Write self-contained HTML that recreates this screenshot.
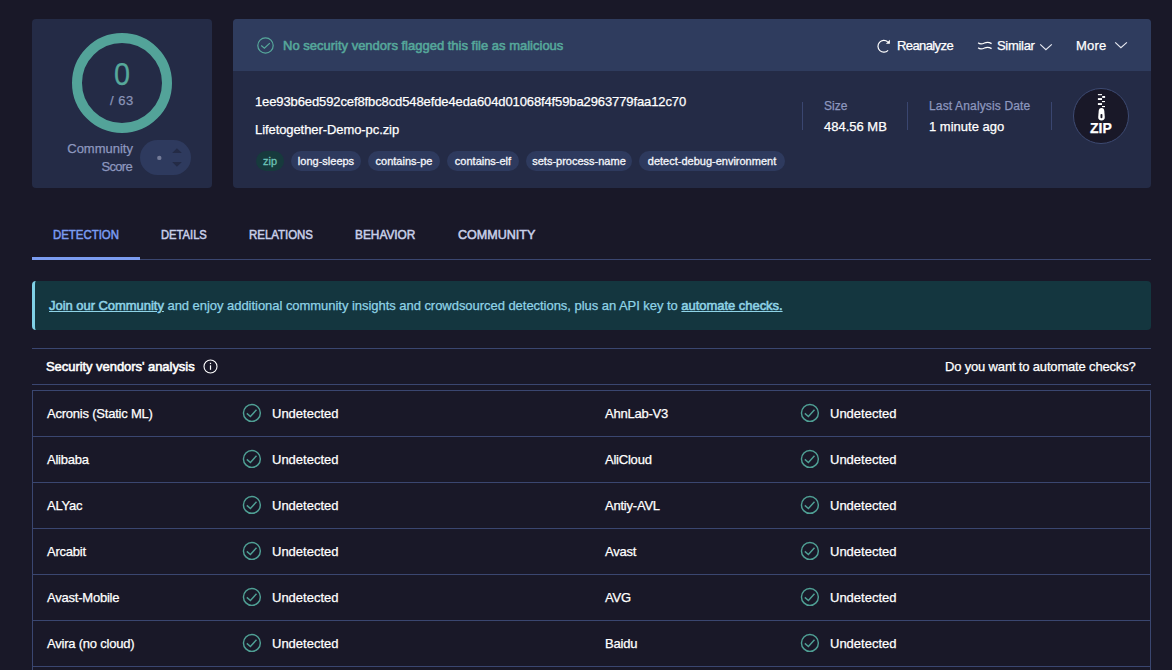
<!DOCTYPE html>
<html><head><meta charset="utf-8">
<style>
*{margin:0;padding:0;box-sizing:border-box}
html,body{width:1172px;height:670px;overflow:hidden;background:#191828;font-family:"Liberation Sans",sans-serif;color:#fff}
.a{position:absolute}
.t{position:absolute;white-space:nowrap;line-height:1;-webkit-text-stroke:0.25px currentColor}
.card{position:absolute;background:#242b46;border-radius:4px}
.hl{position:absolute;height:1px;background:#3a4670}
.vl{position:absolute;width:1px;background:#3a4670}
.pill{position:absolute;top:151px;height:20px;border-radius:10px;background:#2e3a5e;color:#f4f6fb;font-size:11px;line-height:20px;text-align:center;white-space:nowrap;-webkit-text-stroke:0.3px currentColor}
</style></head>
<body>
<div class="card" style="left:32px;top:19px;width:180px;height:169px"></div>
<svg class="a" style="left:72px;top:33px" width="100" height="100" viewBox="0 0 100 100"><circle cx="50" cy="50" r="45" fill="none" stroke="#53a399" stroke-width="10"/></svg>
<div class="t" style="left:114px;top:58px;font-size:32px;color:#56a89b;font-weight:normal;letter-spacing:0px;transform:scaleX(0.9);transform-origin:0 0">0</div>
<div class="t" style="left:110px;top:94px;font-size:13px;color:#8a94b8;font-weight:normal;letter-spacing:0.5px;">/ 63</div>
<div class="t" style="left:50px;top:142px;width:83px;text-align:right;font-size:13px;color:#8d97bf">Community</div>
<div class="t" style="left:50px;top:160px;width:82px;text-align:right;font-size:13px;color:#8d97bf;letter-spacing:-0.7px">Score</div>
<div class="a" style="left:140px;top:140px;width:51px;height:35px;border-radius:18px;background:#2e3a5e"></div>
<svg class="a" style="left:138px;top:136px" width="56" height="42" viewBox="0 0 56 42"><circle cx="21.3" cy="21.9" r="2.2" fill="#747b98"/><path d="M38.9 12.2 L43.9 16.9 L34.2 16.9 Z" fill="#242b46"/><path d="M34.2 26 L43.9 26 L38.9 30.7 Z" fill="#242b46"/></svg>
<div class="card" style="left:233px;top:19px;width:918px;height:169px;overflow:hidden"><div class="a" style="left:0;top:0;width:918px;height:52px;background:#2f3c5e"></div></div>
<div class="a" style="left:257px;top:37px"><svg width="17" height="17" viewBox="0 0 17 17"><circle cx="8.5" cy="8.5" r="7.7" fill="none" stroke="#56a89b" stroke-width="1.2"/><path d="M4.2 8.5 L7.4 11.3 L12.8 6.1" fill="none" stroke="#56a89b" stroke-width="1.2"/></svg></div>
<div class="t" style="left:283px;top:39px;font-size:13px;color:#56a89b;font-weight:normal;letter-spacing:0px;-webkit-text-stroke:0.55px currentColor;">No security vendors flagged this file as malicious</div>
<div class="t" style="left:897px;top:39px;font-size:13px;color:#fff;font-weight:normal;letter-spacing:-0.6px;">Reanalyze</div>
<svg class="a" style="left:872px;top:33px" width="24" height="24" viewBox="0 0 24 24"><path d="M16.1 17.4 A5.9 5.9 0 1 1 15.7 8.8" fill="none" stroke="#fff" stroke-width="1.2"/><path d="M17.9 6.8 L17.9 10.8 L13.9 10.8 Z" fill="#fff"/></svg>
<svg class="a" style="left:972px;top:33px" width="24" height="24" viewBox="0 0 24 24"><path d="M6.2 9.8 C8 11.5 10 11.2 12.5 10 C15 8.8 17 9 19.6 10.6 M6.2 14.8 C8 16.5 10 16.2 12.5 15 C15 13.8 17 14 19.6 15.6" fill="none" stroke="#fff" stroke-width="1.3"/></svg>
<svg class="a" style="left:1036px;top:36px" width="20" height="20" viewBox="0 0 20 20"><path d="M4.2 8.4 L9.9 13.6 L15.8 8.4" fill="none" stroke="#e6e8f0" stroke-width="1.2"/></svg>
<svg class="a" style="left:1110px;top:36px" width="20" height="20" viewBox="0 0 20 20"><path d="M5.2 6.4 L10.9 11.6 L16.9 6.4" fill="none" stroke="#e6e8f0" stroke-width="1.2"/></svg>
<div class="t" style="left:997px;top:39px;font-size:13px;color:#fff;font-weight:normal;letter-spacing:-0.3px;">Similar</div>
<div class="t" style="left:1076px;top:39px;font-size:13px;color:#fff;font-weight:normal;letter-spacing:0.2px;">More</div>
<div class="t" style="left:255px;top:95px;font-size:13px;color:#fff;font-weight:normal;letter-spacing:-0.11px;">1ee93b6ed592cef8fbc8cd548efde4eda604d01068f4f59ba2963779faa12c70</div>
<div class="t" style="left:255px;top:123px;font-size:13px;color:#fff;font-weight:normal;letter-spacing:-0.08px;">Lifetogether-Demo-pc.zip</div>
<div class="pill" style="left:256px;width:28px;background:#173a3d;color:#6cc3b6">zip</div>
<div class="pill" style="left:291px;width:70px;">long-sleeps</div>
<div class="pill" style="left:368px;width:72px;">contains-pe</div>
<div class="pill" style="left:447px;width:72px;">contains-elf</div>
<div class="pill" style="left:526px;width:106px;">sets-process-name</div>
<div class="pill" style="left:639px;width:146px;">detect-debug-environment</div>
<div class="vl" style="left:802px;top:102px;height:28px"></div>
<div class="vl" style="left:907px;top:102px;height:28px"></div>
<div class="vl" style="left:1051px;top:102px;height:28px"></div>
<div class="t" style="left:824px;top:100px;font-size:12px;color:#8d97bf;font-weight:normal;letter-spacing:0px;">Size</div>
<div class="t" style="left:824px;top:120px;font-size:13px;color:#fff;font-weight:normal;letter-spacing:0px;">484.56 MB</div>
<div class="t" style="left:929px;top:100px;font-size:12px;color:#8d97bf;font-weight:normal;letter-spacing:0.15px;">Last Analysis Date</div>
<div class="t" style="left:929px;top:120px;font-size:13px;color:#fff;font-weight:normal;letter-spacing:0px;">1 minute ago</div>
<div class="a" style="left:1073px;top:88px;width:56px;height:56px;border-radius:28px;background:#191828;border:1px solid #3d4a72"></div>
<div class="t" style="left:1090px;top:121px;font-size:14px;color:#fff;font-weight:bold;letter-spacing:0px;">ZIP</div>
<svg class="a" style="left:1090px;top:90px" width="24" height="32" viewBox="0 0 24 32"><g fill="#fff"><rect x="7.9" y="4.1" width="4.1" height="1.1"/><rect x="12.2" y="6" width="2.9" height="1.9"/><rect x="7.9" y="8.1" width="4.1" height="1.9"/><rect x="12" y="11" width="3" height="1.1"/><rect x="7.9" y="13.1" width="4.1" height="1.9"/><rect x="12" y="16" width="3" height="1.1"/><path d="M11.5 18 C9.6 18 8.9 19.3 8.7 21 L8.2 27 C8 29.4 9.4 30.4 11.5 30.4 C13.6 30.4 15 29.4 14.8 27 L14.3 21 C14.1 19.3 13.4 18 11.5 18 Z"/></g><rect x="10.5" y="23.9" width="1.9" height="4.3" rx="0.9" fill="#191828"/></svg>
<div class="t" style="left:53px;top:228px;font-size:13.3px;color:#7b9cf0;font-weight:normal;letter-spacing:0px;-webkit-text-stroke:0.55px currentColor;transform:scaleX(0.859);transform-origin:0 0;">DETECTION</div>
<div class="t" style="left:161px;top:228px;font-size:13.3px;color:#c8cfe8;font-weight:normal;letter-spacing:0px;-webkit-text-stroke:0.55px currentColor;transform:scaleX(0.842);transform-origin:0 0;">DETAILS</div>
<div class="t" style="left:249px;top:228px;font-size:13.3px;color:#c8cfe8;font-weight:normal;letter-spacing:0px;-webkit-text-stroke:0.55px currentColor;transform:scaleX(0.860);transform-origin:0 0;">RELATIONS</div>
<div class="t" style="left:355px;top:228px;font-size:13.3px;color:#c8cfe8;font-weight:normal;letter-spacing:0px;-webkit-text-stroke:0.55px currentColor;transform:scaleX(0.892);transform-origin:0 0;">BEHAVIOR</div>
<div class="t" style="left:458px;top:228px;font-size:13.3px;color:#c8cfe8;font-weight:normal;letter-spacing:0px;-webkit-text-stroke:0.55px currentColor;transform:scaleX(0.944);transform-origin:0 0;">COMMUNITY</div>
<div class="hl" style="left:32px;top:259px;width:1119px"></div>
<div class="a" style="left:32px;top:257px;width:108px;height:3px;background:#7b9cf0"></div>
<div class="a" style="left:32px;top:281px;width:1119px;height:49px;background:#14363f;border-radius:4px;border-left:3px solid #7fd0e6"></div>
<div class="t" style="left:49px;top:299px;font-size:13px;color:#8fd3e6;font-weight:normal;letter-spacing:-0.04px;"><span style="text-decoration:underline;-webkit-text-stroke:0.55px currentColor">Join our Community</span> and enjoy additional community insights and crowdsourced detections, plus an API key to <span style="text-decoration:underline;-webkit-text-stroke:0.55px currentColor">automate checks.</span></div>
<div class="hl" style="left:32px;top:348px;width:1119px"></div>
<div class="t" style="left:46px;top:360px;font-size:13px;color:#fff;font-weight:normal;letter-spacing:-0.05px;-webkit-text-stroke:0.55px currentColor;">Security vendors' analysis</div>
<div class="a" style="left:203px;top:359px"><svg width="15" height="15" viewBox="0 0 15 15"><circle cx="7.5" cy="7.5" r="6.5" fill="none" stroke="#fff" stroke-width="1.1"/><rect x="6.9" y="6.3" width="1.2" height="4.5" fill="#fff"/><rect x="6.9" y="3.8" width="1.2" height="1.3" fill="#fff"/></svg></div>
<div class="t" style="left:945px;top:360px;font-size:13px;color:#fff;font-weight:normal;letter-spacing:-0.17px;">Do you want to automate checks?</div>
<div class="hl" style="left:32px;top:384px;width:1119px"></div>
<div class="a" style="left:32px;top:390px;width:1119px;height:290px;border:1px solid #3a4670;border-bottom:none"></div>
<div class="t" style="left:47px;top:407px;font-size:13px;color:#fff;font-weight:normal;letter-spacing:-0.22px;">Acronis (Static ML)</div>
<div class="a" style="left:242px;top:403px"><svg width="20" height="20" viewBox="0 0 20 20"><circle cx="9.9" cy="9.9" r="8.45" fill="none" stroke="#4f9f94" stroke-width="1.45"/><path d="M4.8 10.4 L8.4 13.5 L14.5 6.8" fill="none" stroke="#4f9f94" stroke-width="1.45"/></svg></div>
<div class="t" style="left:272px;top:407px;font-size:13px;color:#fff;font-weight:normal;letter-spacing:0px;">Undetected</div>
<div class="t" style="left:605px;top:407px;font-size:13px;color:#fff;font-weight:normal;letter-spacing:-0.22px;">AhnLab-V3</div>
<div class="a" style="left:800px;top:403px"><svg width="20" height="20" viewBox="0 0 20 20"><circle cx="9.9" cy="9.9" r="8.45" fill="none" stroke="#4f9f94" stroke-width="1.45"/><path d="M4.8 10.4 L8.4 13.5 L14.5 6.8" fill="none" stroke="#4f9f94" stroke-width="1.45"/></svg></div>
<div class="t" style="left:830px;top:407px;font-size:13px;color:#fff;font-weight:normal;letter-spacing:0px;">Undetected</div>
<div class="hl" style="left:32px;top:436px;width:1119px"></div>
<div class="t" style="left:47px;top:453px;font-size:13px;color:#fff;font-weight:normal;letter-spacing:-0.22px;">Alibaba</div>
<div class="a" style="left:242px;top:449px"><svg width="20" height="20" viewBox="0 0 20 20"><circle cx="9.9" cy="9.9" r="8.45" fill="none" stroke="#4f9f94" stroke-width="1.45"/><path d="M4.8 10.4 L8.4 13.5 L14.5 6.8" fill="none" stroke="#4f9f94" stroke-width="1.45"/></svg></div>
<div class="t" style="left:272px;top:453px;font-size:13px;color:#fff;font-weight:normal;letter-spacing:0px;">Undetected</div>
<div class="t" style="left:605px;top:453px;font-size:13px;color:#fff;font-weight:normal;letter-spacing:-0.22px;">AliCloud</div>
<div class="a" style="left:800px;top:449px"><svg width="20" height="20" viewBox="0 0 20 20"><circle cx="9.9" cy="9.9" r="8.45" fill="none" stroke="#4f9f94" stroke-width="1.45"/><path d="M4.8 10.4 L8.4 13.5 L14.5 6.8" fill="none" stroke="#4f9f94" stroke-width="1.45"/></svg></div>
<div class="t" style="left:830px;top:453px;font-size:13px;color:#fff;font-weight:normal;letter-spacing:0px;">Undetected</div>
<div class="hl" style="left:32px;top:482px;width:1119px"></div>
<div class="t" style="left:47px;top:499px;font-size:13px;color:#fff;font-weight:normal;letter-spacing:-0.22px;">ALYac</div>
<div class="a" style="left:242px;top:495px"><svg width="20" height="20" viewBox="0 0 20 20"><circle cx="9.9" cy="9.9" r="8.45" fill="none" stroke="#4f9f94" stroke-width="1.45"/><path d="M4.8 10.4 L8.4 13.5 L14.5 6.8" fill="none" stroke="#4f9f94" stroke-width="1.45"/></svg></div>
<div class="t" style="left:272px;top:499px;font-size:13px;color:#fff;font-weight:normal;letter-spacing:0px;">Undetected</div>
<div class="t" style="left:605px;top:499px;font-size:13px;color:#fff;font-weight:normal;letter-spacing:-0.22px;">Antiy-AVL</div>
<div class="a" style="left:800px;top:495px"><svg width="20" height="20" viewBox="0 0 20 20"><circle cx="9.9" cy="9.9" r="8.45" fill="none" stroke="#4f9f94" stroke-width="1.45"/><path d="M4.8 10.4 L8.4 13.5 L14.5 6.8" fill="none" stroke="#4f9f94" stroke-width="1.45"/></svg></div>
<div class="t" style="left:830px;top:499px;font-size:13px;color:#fff;font-weight:normal;letter-spacing:0px;">Undetected</div>
<div class="hl" style="left:32px;top:528px;width:1119px"></div>
<div class="t" style="left:47px;top:545px;font-size:13px;color:#fff;font-weight:normal;letter-spacing:-0.22px;">Arcabit</div>
<div class="a" style="left:242px;top:541px"><svg width="20" height="20" viewBox="0 0 20 20"><circle cx="9.9" cy="9.9" r="8.45" fill="none" stroke="#4f9f94" stroke-width="1.45"/><path d="M4.8 10.4 L8.4 13.5 L14.5 6.8" fill="none" stroke="#4f9f94" stroke-width="1.45"/></svg></div>
<div class="t" style="left:272px;top:545px;font-size:13px;color:#fff;font-weight:normal;letter-spacing:0px;">Undetected</div>
<div class="t" style="left:605px;top:545px;font-size:13px;color:#fff;font-weight:normal;letter-spacing:-0.22px;">Avast</div>
<div class="a" style="left:800px;top:541px"><svg width="20" height="20" viewBox="0 0 20 20"><circle cx="9.9" cy="9.9" r="8.45" fill="none" stroke="#4f9f94" stroke-width="1.45"/><path d="M4.8 10.4 L8.4 13.5 L14.5 6.8" fill="none" stroke="#4f9f94" stroke-width="1.45"/></svg></div>
<div class="t" style="left:830px;top:545px;font-size:13px;color:#fff;font-weight:normal;letter-spacing:0px;">Undetected</div>
<div class="hl" style="left:32px;top:574px;width:1119px"></div>
<div class="t" style="left:47px;top:591px;font-size:13px;color:#fff;font-weight:normal;letter-spacing:-0.22px;">Avast-Mobile</div>
<div class="a" style="left:242px;top:587px"><svg width="20" height="20" viewBox="0 0 20 20"><circle cx="9.9" cy="9.9" r="8.45" fill="none" stroke="#4f9f94" stroke-width="1.45"/><path d="M4.8 10.4 L8.4 13.5 L14.5 6.8" fill="none" stroke="#4f9f94" stroke-width="1.45"/></svg></div>
<div class="t" style="left:272px;top:591px;font-size:13px;color:#fff;font-weight:normal;letter-spacing:0px;">Undetected</div>
<div class="t" style="left:605px;top:591px;font-size:13px;color:#fff;font-weight:normal;letter-spacing:-0.22px;">AVG</div>
<div class="a" style="left:800px;top:587px"><svg width="20" height="20" viewBox="0 0 20 20"><circle cx="9.9" cy="9.9" r="8.45" fill="none" stroke="#4f9f94" stroke-width="1.45"/><path d="M4.8 10.4 L8.4 13.5 L14.5 6.8" fill="none" stroke="#4f9f94" stroke-width="1.45"/></svg></div>
<div class="t" style="left:830px;top:591px;font-size:13px;color:#fff;font-weight:normal;letter-spacing:0px;">Undetected</div>
<div class="hl" style="left:32px;top:620px;width:1119px"></div>
<div class="t" style="left:47px;top:637px;font-size:13px;color:#fff;font-weight:normal;letter-spacing:-0.22px;">Avira (no cloud)</div>
<div class="a" style="left:242px;top:633px"><svg width="20" height="20" viewBox="0 0 20 20"><circle cx="9.9" cy="9.9" r="8.45" fill="none" stroke="#4f9f94" stroke-width="1.45"/><path d="M4.8 10.4 L8.4 13.5 L14.5 6.8" fill="none" stroke="#4f9f94" stroke-width="1.45"/></svg></div>
<div class="t" style="left:272px;top:637px;font-size:13px;color:#fff;font-weight:normal;letter-spacing:0px;">Undetected</div>
<div class="t" style="left:605px;top:637px;font-size:13px;color:#fff;font-weight:normal;letter-spacing:-0.22px;">Baidu</div>
<div class="a" style="left:800px;top:633px"><svg width="20" height="20" viewBox="0 0 20 20"><circle cx="9.9" cy="9.9" r="8.45" fill="none" stroke="#4f9f94" stroke-width="1.45"/><path d="M4.8 10.4 L8.4 13.5 L14.5 6.8" fill="none" stroke="#4f9f94" stroke-width="1.45"/></svg></div>
<div class="t" style="left:830px;top:637px;font-size:13px;color:#fff;font-weight:normal;letter-spacing:0px;">Undetected</div>
<div class="hl" style="left:32px;top:666px;width:1119px"></div>
</body></html>
